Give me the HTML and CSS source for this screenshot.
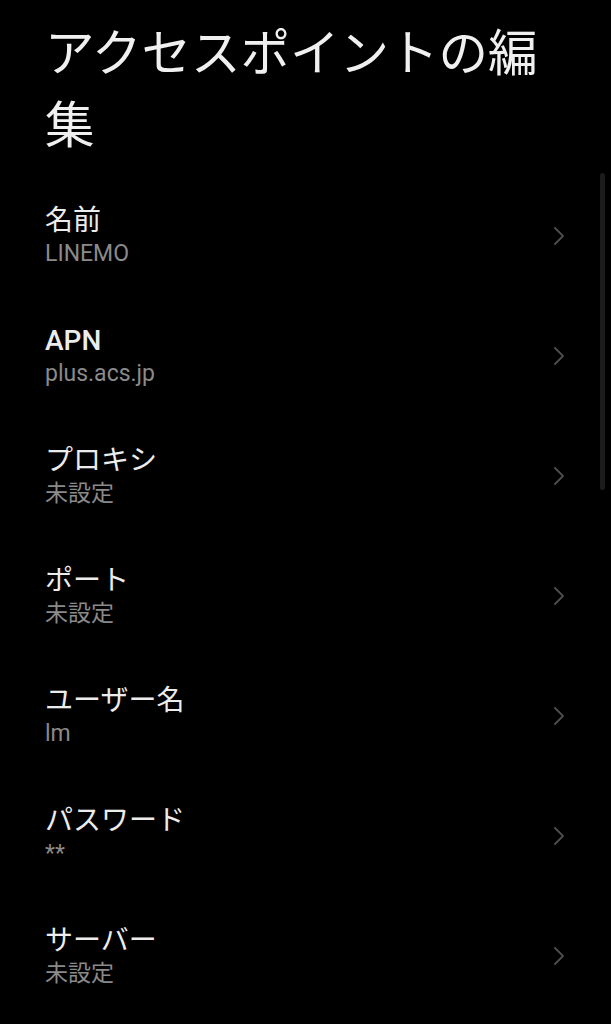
FILE: index.html
```html
<!DOCTYPE html>
<html lang="ja">
<head>
<meta charset="utf-8">
<title>アクセスポイントの編集</title>
<link rel="stylesheet" href="styles.css">
</head>
<body>
<main class="page">
  <h1 class="page-title">アクセスポイントの編集</h1>
  <ul class="list">
    <li class="item"><div class="text"><div class="label">名前</div><div class="value">LINEMO</div></div><svg class="chev" viewBox="0 0 12 20"><path d="M2 2 L10 10 L2 18"/></svg></li>
    <li class="item"><div class="text"><div class="label label-latin">APN</div><div class="value">plus.acs.jp</div></div><svg class="chev" viewBox="0 0 12 20"><path d="M2 2 L10 10 L2 18"/></svg></li>
    <li class="item"><div class="text"><div class="label">プロキシ</div><div class="value">未設定</div></div><svg class="chev" viewBox="0 0 12 20"><path d="M2 2 L10 10 L2 18"/></svg></li>
    <li class="item"><div class="text"><div class="label">ポート</div><div class="value">未設定</div></div><svg class="chev" viewBox="0 0 12 20"><path d="M2 2 L10 10 L2 18"/></svg></li>
    <li class="item"><div class="text"><div class="label">ユーザー名</div><div class="value">lm</div></div><svg class="chev" viewBox="0 0 12 20"><path d="M2 2 L10 10 L2 18"/></svg></li>
    <li class="item"><div class="text"><div class="label">パスワード</div><div class="value">**</div></div><svg class="chev" viewBox="0 0 12 20"><path d="M2 2 L10 10 L2 18"/></svg></li>
    <li class="item"><div class="text"><div class="label">サーバー</div><div class="value">未設定</div></div><svg class="chev" viewBox="0 0 12 20"><path d="M2 2 L10 10 L2 18"/></svg></li>
  </ul>
  <div class="scrollbar"></div>
</main>
</body>
</html>
```

FILE: styles.css
```css
html, body {
  margin: 0;
  padding: 0;
  background: #000;
}
body {
  font-family: "Roboto", "Noto Sans CJK JP", sans-serif;
  color: #ededed;
  overflow: hidden;
  height: 1024px;
}
.page {
  position: relative;
  padding: 18px 0 0 0;
}
.page-title {
  margin: 0;
  padding: 0 50px 0 45px;
  font-size: 49.5px;
  line-height: 72px;
  font-weight: 400;
  color: #f0f0f0;
}
.list {
  list-style: none;
  margin: 14px 0 0 0;
  padding: 0;
}
.item {
  display: flex;
  align-items: center;
  justify-content: space-between;
  height: 120px;
  box-sizing: border-box;
  padding: 0 46px 0 45px;
}
.text {
  display: flex;
  flex-direction: column;
}
.label {
  font-size: 28px;
  line-height: 36px;
  color: #ececec;
}
.label-latin {
  font-weight: 500;
}
.value {
  font-size: 23px;
  line-height: 30px;
  color: #8a8a8a;
}
.chev {
  width: 12px;
  height: 20px;
  fill: none;
  stroke: #4e4e4e;
  stroke-width: 1.8;
  stroke-linecap: round;
  stroke-linejoin: round;
}
.scrollbar {
  position: absolute;
  left: 600px;
  top: 173px;
  width: 5px;
  height: 317px;
  border-radius: 3px;
  background: #1c1c1c;
}
```
